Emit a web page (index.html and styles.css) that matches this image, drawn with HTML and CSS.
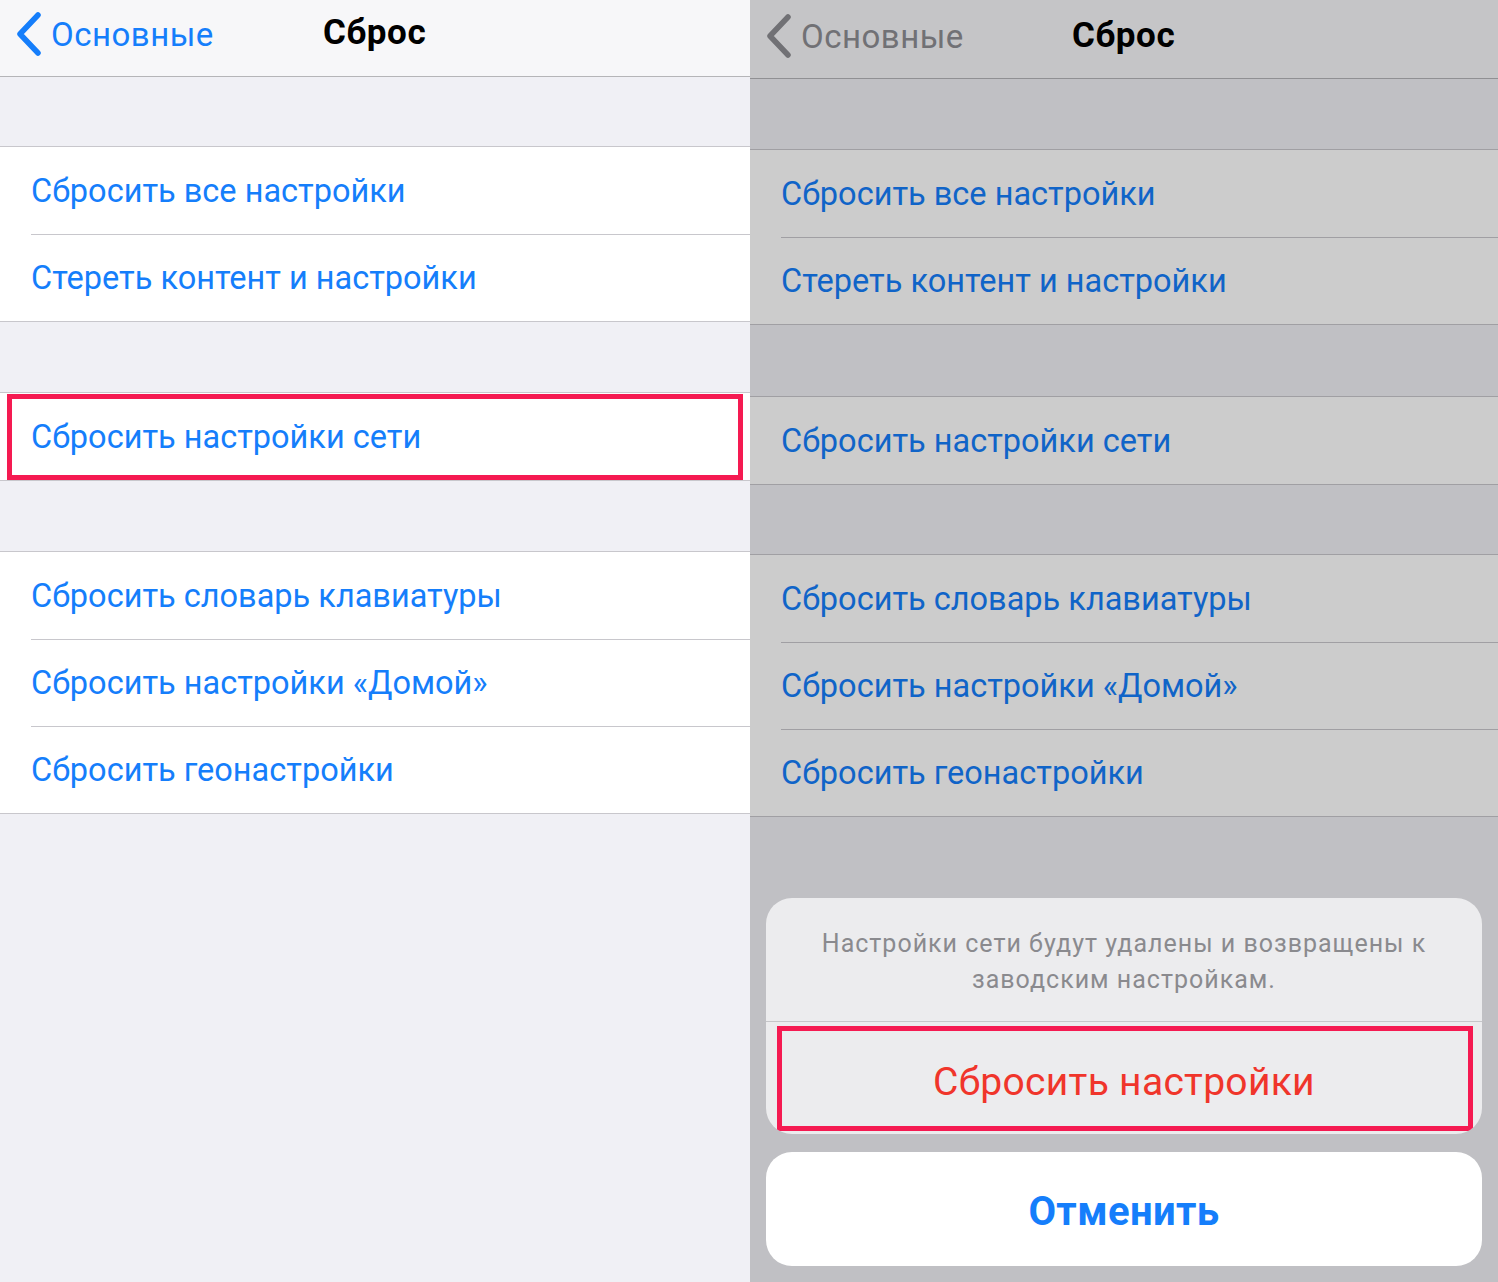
FILE: index.html
```html
<!DOCTYPE html>
<html lang="ru">
<head>
    <meta charset="UTF-8">
    <meta name="viewport" content="width=device-width, initial-scale=1.0">
    <title>Сброс</title>
    <link rel="stylesheet" href="styles.css">
</head>
<body>

    <!-- Step 1: the reset list -->
    <div class="screen">
        <div class="nav-bar">
            <a class="nav-back" href="#">
                <svg class="chevron" width="26" height="44" viewBox="0 0 26 44">
                    <path d="M22 3 L4 22 L22 41" fill="none" stroke="currentColor" stroke-width="5.5" stroke-linecap="round" stroke-linejoin="round"/>
                </svg>
                Основные
            </a>
            <div class="nav-title">Сброс</div>
        </div>

        <div class="group">
            <div class="cell">Сбросить все настройки</div>
            <div class="cell">Стереть контент и настройки</div>
        </div>

        <div class="group">
            <div class="cell marked">Сбросить настройки сети</div>
        </div>

        <div class="group">
            <div class="cell">Сбросить словарь клавиатуры</div>
            <div class="cell">Сбросить настройки «Домой»</div>
            <div class="cell">Сбросить геонастройки</div>
        </div>
    </div>

    <!-- Step 2: confirmation sheet -->
    <div class="screen screen-dimmed">
        <div class="nav-bar">
            <a class="nav-back" href="#">
                <svg class="chevron" width="26" height="44" viewBox="0 0 26 44">
                    <path d="M22 3 L4 22 L22 41" fill="none" stroke="currentColor" stroke-width="5.5" stroke-linecap="round" stroke-linejoin="round"/>
                </svg>
                Основные
            </a>
            <div class="nav-title">Сброс</div>
        </div>

        <div class="group">
            <div class="cell">Сбросить все настройки</div>
            <div class="cell">Стереть контент и настройки</div>
        </div>

        <div class="group group-mid">
            <div class="cell">Сбросить настройки сети</div>
        </div>

        <div class="group group-last">
            <div class="cell">Сбросить словарь клавиатуры</div>
            <div class="cell">Сбросить настройки «Домой»</div>
            <div class="cell">Сбросить геонастройки</div>
        </div>

        <div class="dim"></div>

        <div class="action-sheet">
            <div class="sheet-box">
                <div class="sheet-message">Настройки сети будут удалены и возвращены к заводским настройкам.</div>
                <div class="sheet-action destructive marked">Сбросить настройки</div>
            </div>
            <div class="sheet-box">
                <div class="sheet-action cancel">Отменить</div>
            </div>
        </div>
    </div>

</body>
</html>
```

FILE: styles.css
```css
body {
    margin: 0;
    display: flex;
    font-family: Roboto, "Noto Sans", sans-serif;
    background-color: #efeff4;
    height: 1282px;
    overflow: hidden;
}

.screen {
    position: relative;
    width: 750px;
    height: 1282px;
    background-color: #f0f0f5;
    overflow: hidden;
}

.screen + .screen {
    width: 748px;
}

/* navigation bar */
.nav-bar {
    height: 76px;
    background-color: #f7f7f9;
    border-bottom: 1px solid #b5b5b8;
    position: relative;
    display: flex;
    align-items: center;
}

.nav-back {
    display: flex;
    align-items: center;
    gap: 9px;
    margin-left: 16px;
    margin-top: -8px;
    color: #157efb;
    text-decoration: none;
    font-size: 33px;
    letter-spacing: 0.5px;
}

.nav-back .chevron {
    display: block;
}

.nav-title {
    position: absolute;
    left: 323px;
    top: 12px;
    font-size: 35px;
    font-weight: 700;
    color: #000;
    letter-spacing: 0.6px;
}

/* grouped table */
.group {
    margin-top: 70px;
    background-color: #fff;
    border-top: 1px solid #c8c7cc;
    border-bottom: 1px solid #c8c7cc;
}

.nav-bar + .group {
    margin-top: 69px;
}

.cell {
    position: relative;
    box-sizing: border-box;
    height: 87px;
    padding-top: 1px;
    line-height: 87px;
    padding-left: 31px;
    font-size: 32.5px;
    color: #157efb;
}

.cell + .cell::before {
    content: "";
    position: absolute;
    left: 31px;
    right: 0;
    top: 0;
    border-top: 1px solid #c8c7cc;
}

/* red highlight frame */
.cell.marked::after {
    content: "";
    position: absolute;
    left: 7px;
    right: 7px;
    top: 1px;
    bottom: 0;
    border: 5px solid #f51a51;
}

/* second screen: modal state */
.screen-dimmed .nav-bar {
    height: 78px;
}

.screen-dimmed .nav-back {
    color: #8e8e93;
    margin-top: -6px;
}

.screen-dimmed .nav-title {
    left: 322px;
    top: 15px;
}

.screen-dimmed .nav-bar + .group {
    margin-top: 70px;
}

.screen-dimmed .group-mid {
    margin-top: 71px;
}

.screen-dimmed .group-last {
    margin-top: 69px;
}

.dim {
    position: absolute;
    inset: 0;
    background-color: rgba(0, 0, 0, 0.2);
}

.action-sheet {
    position: absolute;
    left: 16px;
    right: 16px;
    top: 898px;
    display: flex;
    flex-direction: column;
    gap: 18px;
}

.sheet-box {
    background-color: #ececee;
    border-radius: 26px;
    overflow: hidden;
}

.sheet-box + .sheet-box {
    background-color: #fff;
}

.sheet-message {
    padding: 28px 30px 23px;
    text-align: center;
    font-size: 25px;
    line-height: 36px;
    color: #8a8a8e;
    letter-spacing: 1px;
    border-bottom: 1px solid #c6c6c9;
}

.sheet-action {
    position: relative;
    box-sizing: border-box;
    height: 112px;
    padding-top: 8px;
    display: flex;
    align-items: center;
    justify-content: center;
    font-size: 39px;
}

.destructive {
    color: #f0352b;
    letter-spacing: 0.3px;
}

.cancel {
    height: 114px;
    padding-top: 5px;
    color: #157efb;
    font-weight: 700;
    font-size: 40px;
    letter-spacing: 0.4px;
}

.sheet-action.marked::after {
    content: "";
    position: absolute;
    left: 11px;
    right: 9px;
    top: 4px;
    bottom: 3px;
    border: 5px solid #f51a51;
}
```
